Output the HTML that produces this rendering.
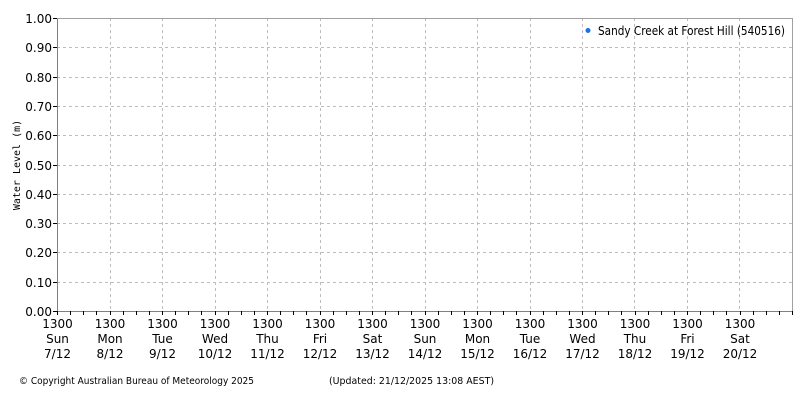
<!DOCTYPE html>
<html><head><meta charset="utf-8"><style>
html,body{margin:0;padding:0;background:#fff;width:800px;height:400px;overflow:hidden}
svg{display:block}
text{font-family:"DejaVu Sans","Liberation Sans",sans-serif;fill:#000}
</style></head><body>
<svg width="800" height="400" viewBox="0 0 800 400" xmlns="http://www.w3.org/2000/svg">
<g stroke="#bdbdbd" stroke-width="1" stroke-dasharray="3,3" shape-rendering="crispEdges">
<line x1="57" y1="18.5" x2="792" y2="18.5"/>
<line x1="57" y1="47.5" x2="792" y2="47.5"/>
<line x1="57" y1="77.5" x2="792" y2="77.5"/>
<line x1="57" y1="106.5" x2="792" y2="106.5"/>
<line x1="57" y1="135.5" x2="792" y2="135.5"/>
<line x1="57" y1="165.5" x2="792" y2="165.5"/>
<line x1="57" y1="194.5" x2="792" y2="194.5"/>
<line x1="57" y1="223.5" x2="792" y2="223.5"/>
<line x1="57" y1="252.5" x2="792" y2="252.5"/>
<line x1="57" y1="282.5" x2="792" y2="282.5"/>
<line x1="110.5" y1="18" x2="110.5" y2="311"/>
<line x1="162.5" y1="18" x2="162.5" y2="311"/>
<line x1="215.5" y1="18" x2="215.5" y2="311"/>
<line x1="267.5" y1="18" x2="267.5" y2="311"/>
<line x1="320.5" y1="18" x2="320.5" y2="311"/>
<line x1="372.5" y1="18" x2="372.5" y2="311"/>
<line x1="425.5" y1="18" x2="425.5" y2="311"/>
<line x1="477.5" y1="18" x2="477.5" y2="311"/>
<line x1="530.5" y1="18" x2="530.5" y2="311"/>
<line x1="582.5" y1="18" x2="582.5" y2="311"/>
<line x1="634.5" y1="18" x2="634.5" y2="311"/>
<line x1="687.5" y1="18" x2="687.5" y2="311"/>
<line x1="739.5" y1="18" x2="739.5" y2="311"/>
</g>
<g stroke="#808080" stroke-width="1" shape-rendering="crispEdges" fill="none">
<line x1="57.5" y1="18" x2="57.5" y2="312"/>
<line x1="57" y1="311.5" x2="792" y2="311.5"/>
<line x1="57" y1="18.5" x2="792" y2="18.5" stroke="#a0a0a0"/>
<line x1="792.5" y1="18" x2="792.5" y2="312" stroke="#a0a0a0"/>
</g>
<g stroke="#000" stroke-width="1" shape-rendering="crispEdges">
<line x1="53" y1="18.5" x2="57" y2="18.5"/><line x1="53" y1="47.5" x2="57" y2="47.5"/><line x1="53" y1="77.5" x2="57" y2="77.5"/><line x1="53" y1="106.5" x2="57" y2="106.5"/><line x1="53" y1="135.5" x2="57" y2="135.5"/><line x1="53" y1="165.5" x2="57" y2="165.5"/><line x1="53" y1="194.5" x2="57" y2="194.5"/><line x1="53" y1="223.5" x2="57" y2="223.5"/><line x1="53" y1="252.5" x2="57" y2="252.5"/><line x1="53" y1="282.5" x2="57" y2="282.5"/><line x1="53" y1="311.5" x2="57" y2="311.5"/>
</g>
<g id="ticks" stroke="#000" stroke-width="1" shape-rendering="crispEdges"></g>
<g font-size="12" text-anchor="end">
<text x="52" y="23">1.00</text><text x="52" y="52">0.90</text><text x="52" y="82">0.80</text><text x="52" y="111">0.70</text><text x="52" y="140">0.60</text><text x="52" y="170">0.50</text><text x="52" y="199">0.40</text><text x="52" y="228">0.30</text><text x="52" y="257">0.20</text><text x="52" y="287">0.10</text><text x="52" y="316">0.00</text>
</g>
<text transform="translate(20,165) rotate(-90)" text-anchor="middle" font-size="10" style="font-family:'DejaVu Sans Mono','Liberation Mono',monospace">Water Level (m)</text>
<g font-size="12" text-anchor="middle" id="xl"></g>
<circle cx="588" cy="30.5" r="2.5" fill="#1a73e8"/>
<text x="598" y="35" font-size="12" textLength="187" lengthAdjust="spacingAndGlyphs">Sandy Creek at Forest Hill (540516)</text>
<text x="19" y="384" font-size="10" textLength="235" lengthAdjust="spacingAndGlyphs">© Copyright Australian Bureau of Meteorology 2025</text>
<text x="329" y="384" font-size="10" textLength="165" lengthAdjust="spacingAndGlyphs">(Updated: 21/12/2025 13:08 AEST)</text>
</svg>
<script>
var days=["Sun","Mon","Tue","Wed","Thu","Fri","Sat","Sun","Mon","Tue","Wed","Thu","Fri","Sat"];
var ns="http://www.w3.org/2000/svg",xl=document.getElementById("xl"),tk=document.getElementById("ticks");
for(var i=0;i<14;i++){var x=57.5+52.5*i;
 [["1300",328],[days[i],343],[(7+i)+"/12",358]].forEach(function(a){var t=document.createElementNS(ns,"text");t.setAttribute("x",x);t.setAttribute("y",a[1]);t.textContent=a[0];xl.appendChild(t);});}
for(var j=0;j<=56;j++){var x=Math.round(57+13.125*j)+0.5;var l=document.createElementNS(ns,"line");l.setAttribute("x1",x);l.setAttribute("x2",x);l.setAttribute("y1",311);l.setAttribute("y2",315);tk.appendChild(l);}
</script>
</body></html>
